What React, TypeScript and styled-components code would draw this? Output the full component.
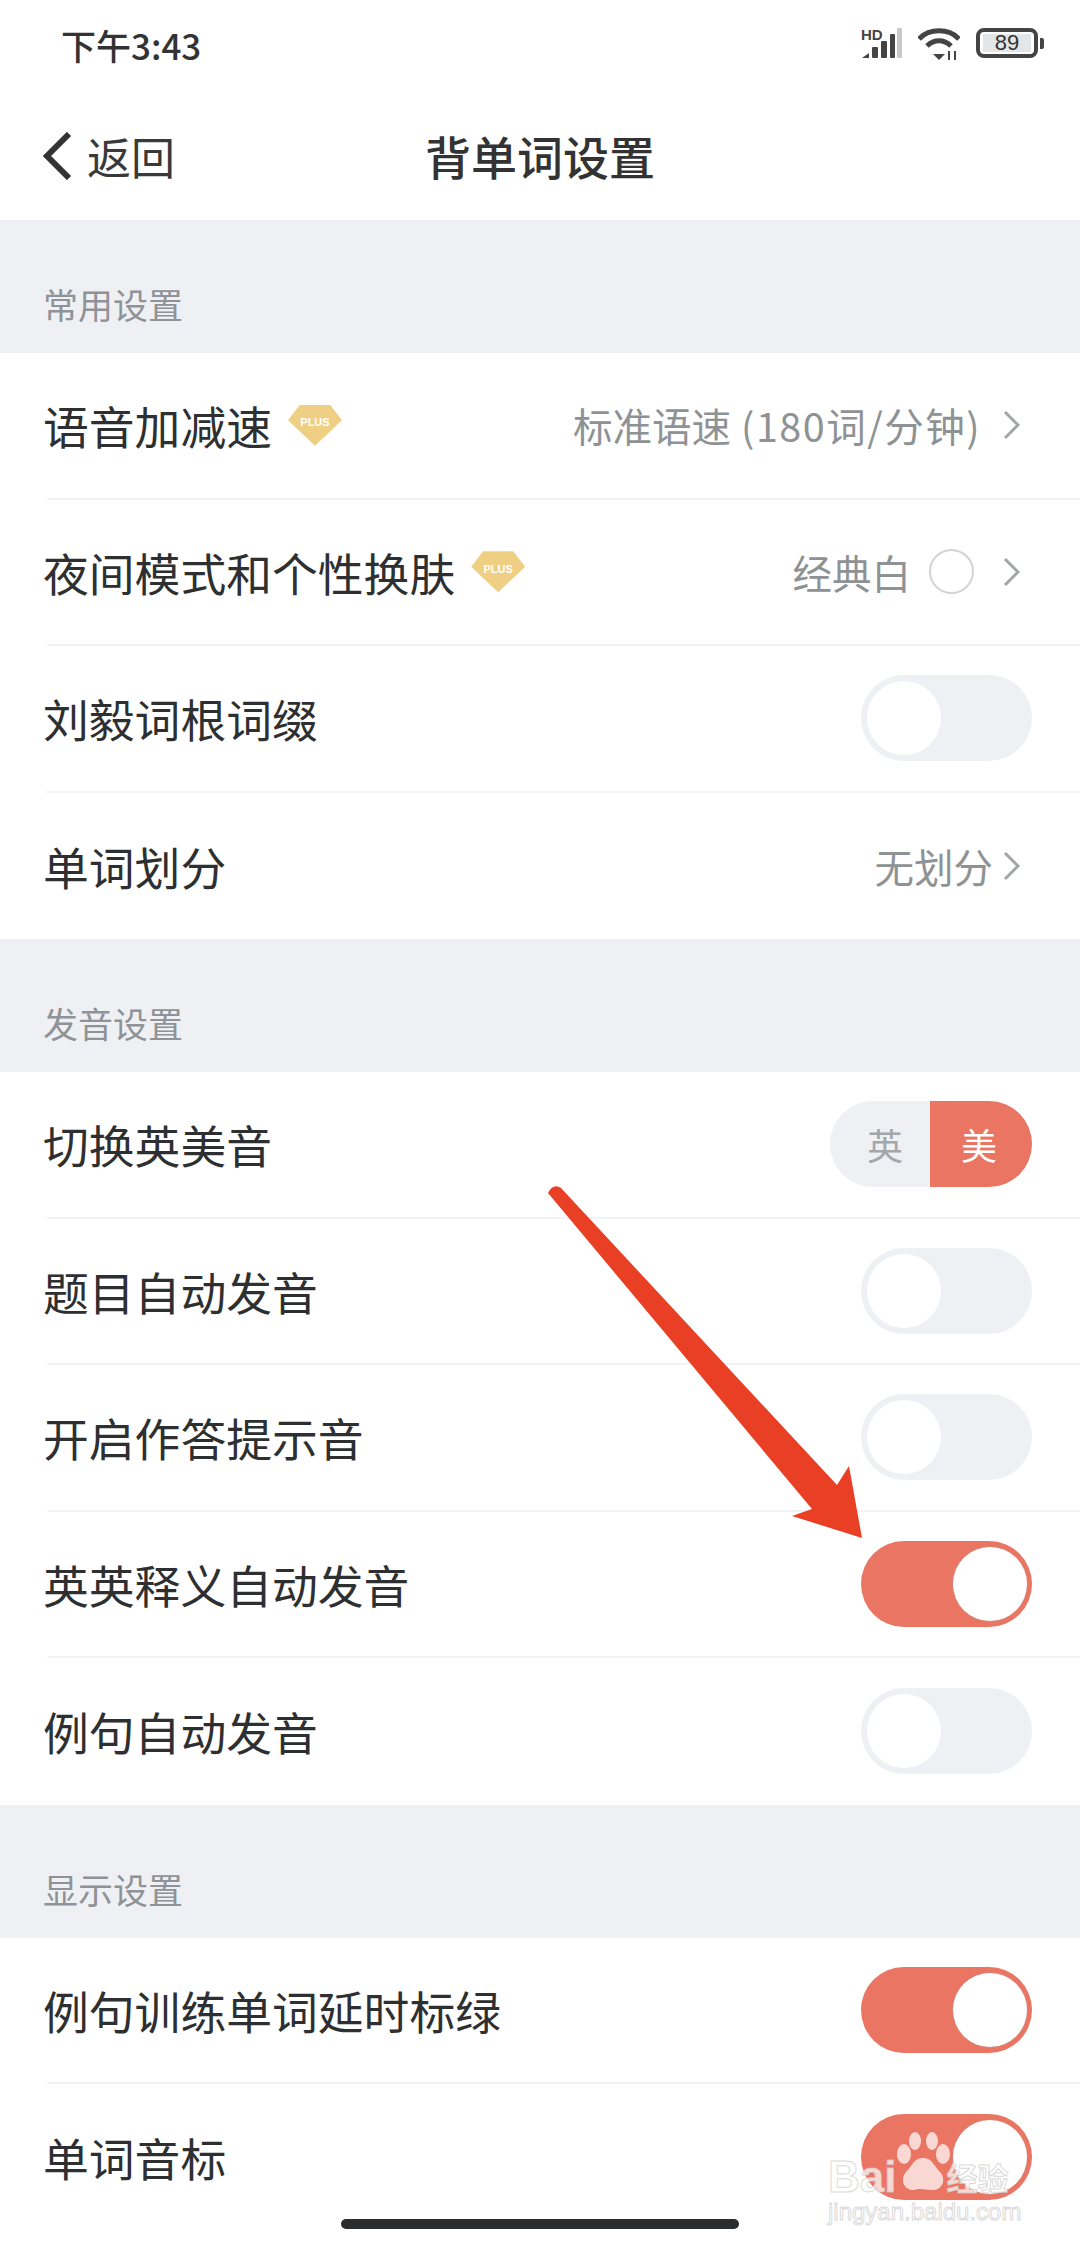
import styled, { createGlobalStyle } from "styled-components";

const GlobalStyle = createGlobalStyle`
  html, body {
    margin: 0;
    padding: 0;
    background: #fff;
  }
  * {
    box-sizing: border-box;
  }
`;

const Page = styled.div`
  position: relative;
  width: 1080px;
  height: 2248px;
  overflow: hidden;
  background: #fff;
  color: #2e2f31;
  font-family: "Noto Sans CJK SC", "Noto Sans", sans-serif;
`;
const StatusBar = styled.div`
  height: 90px;
  display: flex;
  justify-content: space-between;
  align-items: flex-start;
  padding: 22px 36px 0 61px;
`;
const Time = styled.div`
  font-size: 35px;
  line-height: 46px;
  font-weight: 500;
  color: #333;
`;
const StatusIcons = styled.div`
  display: flex;
  align-items: flex-start;
  padding-top: 6px;
`;
const Signal = styled.div`
  position: relative;
  width: 41px;
  height: 32px;
  margin-right: 16px;
`;
const HdLabel = styled.span`
  position: absolute;
  left: 0;
  top: -1px;
  font-family: "Liberation Sans", sans-serif;
  font-size: 15px;
  line-height: 15px;
  font-weight: 700;
  color: #444;
`;
const Battery = styled.div`
  width: 62px;
  height: 30px;
  margin-left: 16px;
  border: 4px solid #444;
  border-radius: 8px;
  padding: 2px 3px;
  display: flex;
`;
const BatteryFill = styled.div`
  flex: 1;
  background: #e4e5e6;
  display: flex;
  align-items: center;
  justify-content: center;
  font-family: "Liberation Sans", sans-serif;
  font-size: 22px;
  line-height: 20px;
  color: #333;
`;
const BatteryNub = styled.div`
  width: 4px;
  height: 11px;
  margin: 10px 0 0 2px;
  background: #444;
  border-radius: 0 2px 2px 0;
`;
const NavBar = styled.div`
  position: relative;
  height: 130px;
  display: flex;
  align-items: center;
  justify-content: center;
`;
const BackLink = styled.div`
  position: absolute;
  left: 42px;
  top: 36px;
  display: flex;
  align-items: center;
  gap: 15px;
  font-size: 44px;
  line-height: 60px;
  color: #38393b;
`;
const Title = styled.h1`
  margin: 0;
  font-size: 46px;
  line-height: 64px;
  font-weight: 500;
  color: #333;
`;
const SectionHead = styled.div`
  height: 133px;
  display: flex;
  align-items: flex-end;
  padding: 0 0 25px 43px;
  background: #eef0f3;
  font-size: 35px;
  line-height: 48px;
  color: #8f9397;
`;
const Rows = styled.div`
  background: #fff;
`;
const Row = styled.div`
  height: 146.5px;
  margin-left: 47px;
  padding-right: 48px;
  display: flex;
  align-items: center;
  justify-content: space-between;
  border-bottom: 2px solid #f1f3f6;
  &:last-child {
    border-bottom: 0;
  }
`;
const Label = styled.div`
  display: flex;
  align-items: center;
  margin-left: -4px;
  font-size: 45.8px;
  line-height: 60px;
  color: #2e2f31;
`;
const PlusBadge = styled.span`
  width: 54px;
  height: 41px;
  margin: 0 0 0 16px;
  display: flex;
  align-items: center;
  justify-content: center;
  padding-bottom: 6px;
  background: #efcf83;
  clip-path: polygon(22% 0, 78% 0, 100% 38%, 50% 100%, 0 38%);
  color: #fff;
  font-family: "Liberation Sans", sans-serif;
  font-size: 11px;
  line-height: 12px;
  font-weight: 700;
`;
const Value = styled.div`
  display: flex;
  align-items: center;
  margin-right: 11px;
  font-size: 39.5px;
  line-height: 54px;
  color: #8f9294;
`;
const SpeedDetail = styled.span`
  margin-left: 10px;
  letter-spacing: 1.5px;
`;
const ThemeDot = styled.span`
  width: 45px;
  height: 45px;
  margin-left: 18px;
  border: 2px solid #d3d4d5;
  border-radius: 50%;
  background: #fff;
`;
const Chevron = styled.svg`
  width: 18px;
  height: 30px;
  margin-left: ${(props: { $gap: number }) => props.$gap}px;
  fill: none;
  stroke: #a3a6a8;
  stroke-width: 3;
`;
const Track = styled.div<{ $on?: boolean }>`
  width: 171px;
  height: 86px;
  padding: 6px;
  border-radius: 43px;
  display: flex;
  justify-content: ${(props) => (props.$on ? "flex-end" : "flex-start")};
  background: ${(props) => (props.$on ? "#e97562" : "#eef0f3")};
`;
const Knob = styled.div<{ $on?: boolean }>`
  width: 74px;
  height: 74px;
  border-radius: 50%;
  background: #fff;
  margin-right: ${(props) => (props.$on ? "-1px" : "0")};
  box-shadow: ${(props) => (props.$on ? "0 0 0 1px #d98476" : "none")};
`;
const Dual = styled.div`
  width: 202px;
  height: 86px;
  border-radius: 43px;
  overflow: hidden;
  display: flex;
  font-size: 36px;
`;
const DualSide = styled.div<{ $active?: boolean }>`
  width: ${(props) => (props.$active ? "102px" : "100px")};
  display: flex;
  align-items: center;
  justify-content: center;
  padding: ${(props) => (props.$active ? "0 4px 0 0" : "0 0 0 10px")};
  background: ${(props) => (props.$active ? "#e97562" : "#eef0f3")};
  color: ${(props) => (props.$active ? "#fff" : "#a4a7aa")};
`;
const ArrowOverlay = styled.svg`
  position: absolute;
  left: 0;
  top: 0;
  width: 1080px;
  height: 2248px;
  pointer-events: none;
`;
const HomeBar = styled.div`
  position: absolute;
  left: 341px;
  top: 2219px;
  width: 398px;
  height: 10px;
  border-radius: 5px;
  background: #2b2c2e;
`;
const Watermark = styled.div`
  position: absolute;
  left: 828px;
  top: 2132px;
  width: 196px;
  color: rgba(255, 255, 255, 0.72);
  -webkit-text-stroke: 1px rgba(205, 205, 205, 0.75);
`;
const Paw = styled.svg`
  position: absolute;
  left: 67px;
  top: 0;
  width: 58px;
  height: 64px;
`;
const MarkLine = styled.div`
  display: flex;
  align-items: center;
  height: 38px;
  margin-top: 26px;
  font-family: "Liberation Sans", sans-serif;
  font-size: 44px;
  line-height: 38px;
  font-weight: 700;
`;
const MarkDu = styled.span`
  width: 50px;
  margin-top: 6px;
  text-align: center;
  color: #e97562;
  -webkit-text-stroke: 0;
  font-size: 24px;
`;
const MarkCn = styled.span`
  font-family: "Noto Sans CJK SC", sans-serif;
  font-size: 31px;
  font-weight: 700;
  white-space: nowrap;
`;
const MarkUrl = styled.div`
  margin-top: 3px;
  font-family: "Liberation Sans", sans-serif;
  font-size: 24px;
  line-height: 26px;
  white-space: nowrap;
`;

function Arrow({ gap }: { gap: number }) {
  return (
    <Chevron $gap={gap} viewBox="0 0 18 30">
      <path d="M2 2l13 13L2 28" />
    </Chevron>
  );
}

function Toggle({ on }: { on?: boolean }) {
  return (
    <Track $on={on}>
      <Knob $on={on} />
    </Track>
  );
}

function App() {
  return (
    <Page>
      <GlobalStyle />
      <StatusBar>
        <Time>下午3:43</Time>
        <StatusIcons>
          <Signal>
            <HdLabel>HD</HdLabel>
            <svg width="41" height="32" viewBox="0 0 41 32">
              <path d="M1 30l7-5v5z" fill="#444" />
              <rect x="11" y="19" width="6" height="11" rx="1" fill="#444" />
              <rect x="20" y="13" width="6" height="17" rx="1" fill="#444" />
              <rect x="29" y="6" width="5" height="24" rx="1" fill="#444" />
              <rect x="36" y="0" width="5" height="30" rx="1" fill="#c9cacb" />
            </svg>
          </Signal>
          <svg width="42" height="32" viewBox="0 0 42 32" fill="none" stroke="#444" strokeWidth="5">
            <path d="M1 11C11 0 31 0 41 11" />
            <path d="M9 18c7-7 17-7 24 0" />
            <path d="M15 26h12l-6 6z" fill="#444" stroke="none" />
            <path d="M31 32v-9M37 32v-9" stroke="#444" strokeWidth="2" />
          </svg>
          <Battery>
            <BatteryFill>89</BatteryFill>
          </Battery>
          <BatteryNub />
        </StatusIcons>
      </StatusBar>
      <NavBar>
        <BackLink>
          <svg width="30" height="48" viewBox="0 0 30 48" fill="none" stroke="#333" strokeWidth="6">
            <path d="M27 2L5 24l22 22" />
          </svg>
          返回
        </BackLink>
        <Title>背单词设置</Title>
      </NavBar>

      <SectionHead>常用设置</SectionHead>
      <Rows>
        <Row>
          <Label>
            语音加减速
            <PlusBadge>PLUS</PlusBadge>
          </Label>
          <Value>
            标准语速
            <SpeedDetail>(180词/分钟)</SpeedDetail>
            <Arrow gap={22} />
          </Value>
        </Row>
        <Row>
          <Label>
            夜间模式和个性换肤
            <PlusBadge>PLUS</PlusBadge>
          </Label>
          <Value>
            经典白
            <ThemeDot />
            <Arrow gap={29} />
          </Value>
        </Row>
        <Row>
          <Label>刘毅词根词缀</Label>
          <Toggle />
        </Row>
        <Row>
          <Label>单词划分</Label>
          <Value>
            无划分
            <Arrow gap={10} />
          </Value>
        </Row>
      </Rows>

      <SectionHead>发音设置</SectionHead>
      <Rows>
        <Row>
          <Label>切换英美音</Label>
          <Dual>
            <DualSide>英</DualSide>
            <DualSide $active>美</DualSide>
          </Dual>
        </Row>
        <Row>
          <Label>题目自动发音</Label>
          <Toggle />
        </Row>
        <Row>
          <Label>开启作答提示音</Label>
          <Toggle />
        </Row>
        <Row>
          <Label>英英释义自动发音</Label>
          <Toggle on />
        </Row>
        <Row>
          <Label>例句自动发音</Label>
          <Toggle />
        </Row>
      </Rows>

      <SectionHead>显示设置</SectionHead>
      <Rows>
        <Row>
          <Label>例句训练单词延时标绿</Label>
          <Toggle on />
        </Row>
        <Row>
          <Label>单词音标</Label>
          <Toggle on />
        </Row>
      </Rows>

      {/* annotation drawn over the screenshot */}
      <ArrowOverlay viewBox="0 0 1080 2248">
        <path
          d="M548 1193Q553 1183 561 1188L837 1485L849 1466L862 1538L792 1516L812 1509Z"
          fill="#e83f25"
        />
      </ArrowOverlay>
      <HomeBar />
      <Watermark>
        <Paw viewBox="0 0 58 64">
          <g fill="rgba(255,255,255,0.72)">
            <ellipse cx="9" cy="22" rx="7" ry="10" />
            <ellipse cx="20" cy="9" rx="6" ry="9" />
            <ellipse cx="37" cy="9" rx="6" ry="9" />
            <ellipse cx="48" cy="22" rx="7" ry="10" />
            <path d="M28 26c9 0 11 8 17 14 7 7 2 19-8 18-6 0-12-2-18 0-9 1-15-10-8-18 6-6 8-14 17-14z" />
          </g>
        </Paw>
        <MarkLine>
          Bai
          <MarkDu>du</MarkDu>
          <MarkCn>经验</MarkCn>
        </MarkLine>
        <MarkUrl>jingyan.baidu.com</MarkUrl>
      </Watermark>
    </Page>
  );
}

export default App;
